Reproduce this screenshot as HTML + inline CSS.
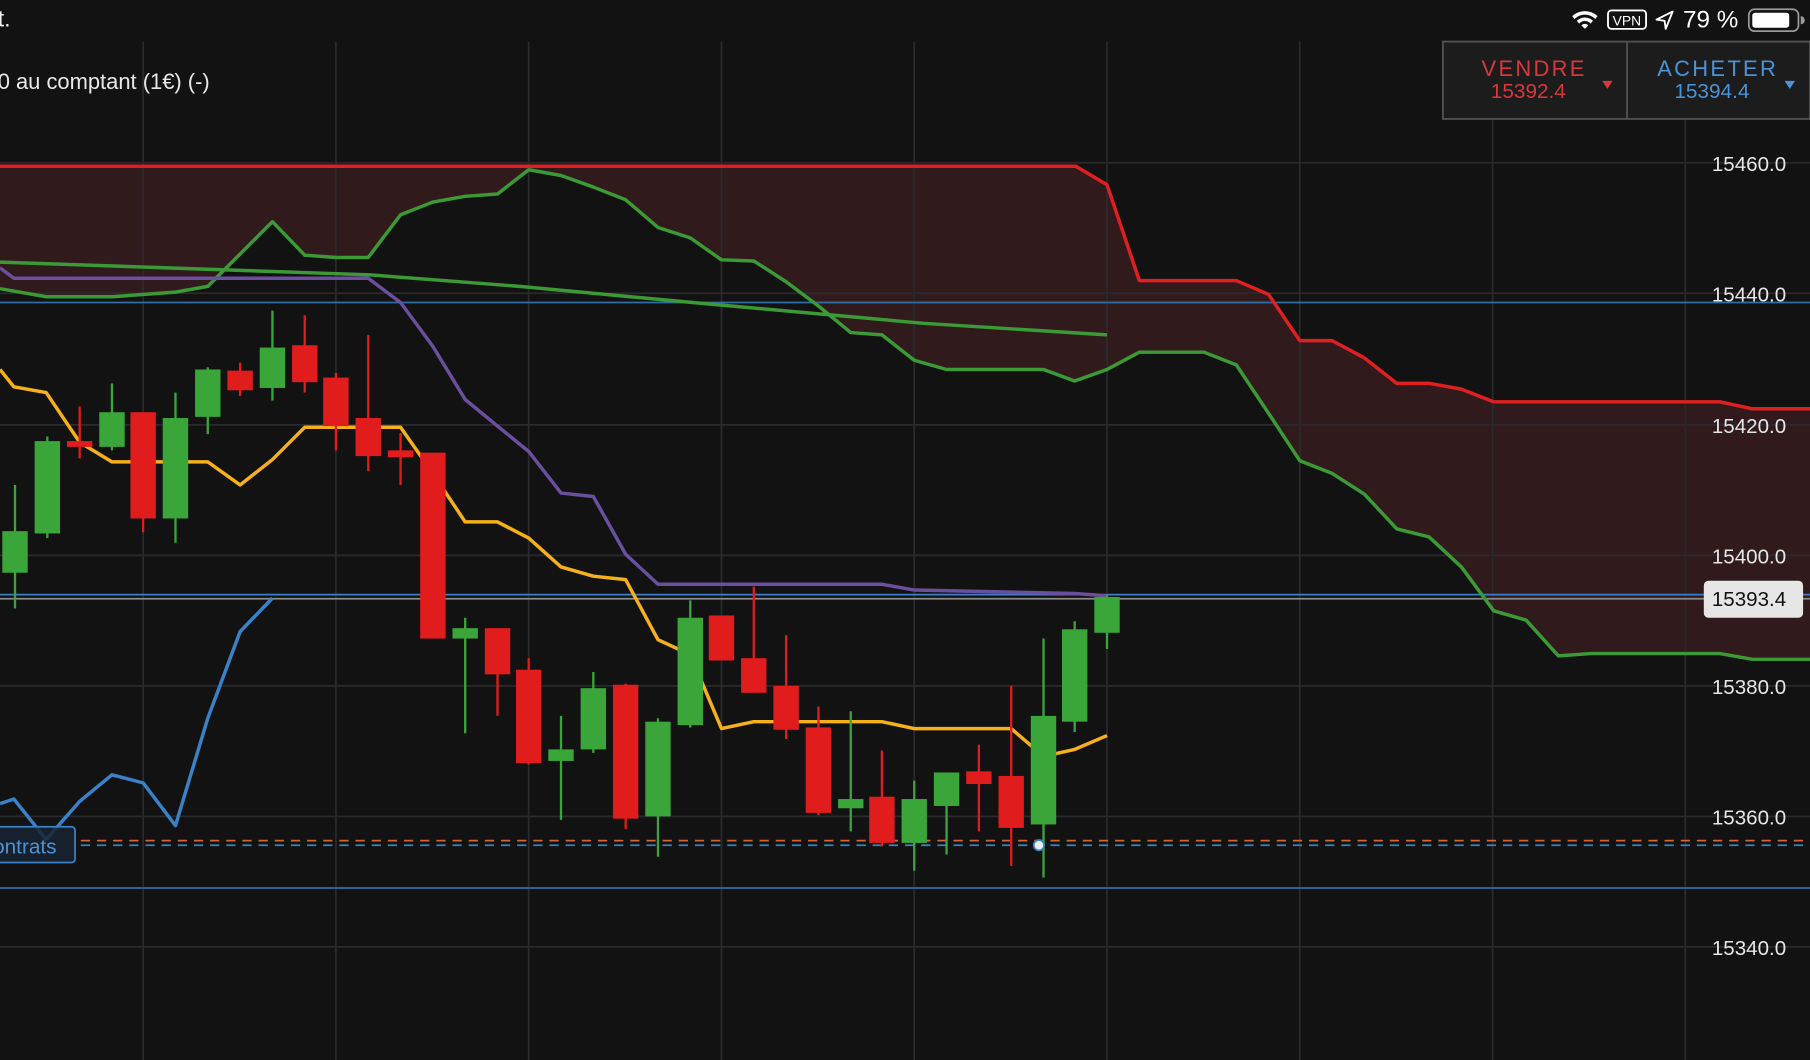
<!DOCTYPE html>
<html><head><meta charset="utf-8"><style>
html,body{margin:0;padding:0;background:#121212;width:1810px;height:1060px;overflow:hidden}
svg{display:block}
text{font-family:"Liberation Sans",sans-serif}
</style></head><body>
<svg width="1810" height="1060" viewBox="0 0 1568 918" preserveAspectRatio="none">
<rect width="1568" height="918" fill="#121212"/>
<polygon fill="#301a1c" points="0,144 932,144 959,160 987,243 1071,243 1099,255 1126,295 1154,295 1182,310 1210,332 1238,332 1266,337 1294,348 1490,348 1518,354 1568,354 1568,571 1518,571 1490,566 1378,566 1350,568 1322,537 1294,529 1266,491 1238,465 1210,458 1182,428 1154,410 1126,399 1099,358 1071,316 1043,305 987,305 959,320 931,330 904,320 820,320 792,312 764,290 737,288 709,265 681,244 653,226 625,225 598,206 570,197 542,173 514,162 486,152 458,147 431,168 403,170 375,175 347,186 319,223 291,223 264,221 236,192 180,248 152,253 97,257 40,257 0,250"/>
<g stroke="#2a2a2d" stroke-width="1.5">
<line x1="124" y1="36" x2="124" y2="918"/><line x1="291" y1="36" x2="291" y2="918"/><line x1="458" y1="36" x2="458" y2="918"/><line x1="625" y1="36" x2="625" y2="918"/><line x1="792" y1="36" x2="792" y2="918"/><line x1="959" y1="36" x2="959" y2="918"/><line x1="1126" y1="36" x2="1126" y2="918"/><line x1="1293" y1="103" x2="1293" y2="918"/><line x1="1460" y1="103" x2="1460" y2="918"/>
<line x1="0" y1="141" x2="1568" y2="141"/><line x1="0" y1="254" x2="1568" y2="254"/><line x1="0" y1="368" x2="1568" y2="368"/><line x1="0" y1="481" x2="1568" y2="481"/><line x1="0" y1="594" x2="1568" y2="594"/><line x1="0" y1="707" x2="1568" y2="707"/><line x1="0" y1="820" x2="1568" y2="820"/>
</g>
<line x1="0" y1="262" x2="1568" y2="262" stroke="#2f6ea8" stroke-width="1.5"/>
<line x1="0" y1="769" x2="1568" y2="769" stroke="#2f6ea8" stroke-width="1.5"/>
<line x1="0" y1="518.5" x2="1568" y2="518.5" stroke="#8a8a8a" stroke-width="1.5"/>
<line x1="0" y1="515" x2="1568" y2="515" stroke="#3a7fc8" stroke-width="1.5"/>
<line x1="70" y1="728" x2="1568" y2="728" stroke="#d8632e" stroke-width="1.5" stroke-dasharray="8,6"/>
<line x1="70" y1="732" x2="1568" y2="732" stroke="#3a82c8" stroke-width="1.5" stroke-dasharray="8,6"/>
<g fill="none" stroke-width="3" stroke-linejoin="round">
<polyline stroke="#e02020" points="0,144 932,144 959,160 987,243 1071,243 1099,255 1126,295 1154,295 1182,310 1210,332 1238,332 1266,337 1294,348 1490,348 1518,354 1568,354"/>
<polyline stroke="#3b9a35" points="0,250 40,257 97,257 152,253 180,248 236,192 264,221 291,223 319,223 347,186 375,175 403,170 431,168 458,147 486,152 514,162 542,173 570,197 598,206 625,225 653,226 681,244 709,265 737,288 764,290 792,312 820,320 904,320 931,330 959,320 987,305 1043,305 1071,316 1099,358 1126,399 1154,410 1182,428 1210,458 1238,465 1266,491 1294,529 1322,537 1350,568 1378,566 1490,566 1518,571 1568,571"/>
<polyline stroke="#3b9a35" points="0,227 320,238 450,248 600,262 800,280 959,290"/>
<polyline stroke="#6b4f9e" points="0,232 12,241 319,241 347,262 375,300 403,346 431,369 458,391 486,427 514,430 542,480 570,506 764,506 792,511 931,514 959,516"/>
<polyline stroke="#f5b01b" points="0,320 12,335 40,340 69,383 97,400 180,400 208,420 236,398 264,370 347,370 375,410 403,452 431,452 458,466 486,491 514,499 542,502 570,554 598,567 625,631 653,625 764,625 792,631 876,631 904,655 931,649 959,637"/>
<polyline stroke="#3a82c8" points="0,696 12,692 40,727 69,694 97,671 124,678 152,715 180,622 208,547 236,518"/>
</g>
<g stroke-width="2">
<g fill="#3aa63a" stroke="#3aa63a">
<line x1="13" y1="420" x2="13" y2="527"/><rect x="3" y="461" width="20" height="34"/>
<line x1="41" y1="378" x2="41" y2="466"/><rect x="31" y="383" width="20" height="78"/>
<line x1="97" y1="332" x2="97" y2="390"/><rect x="87" y="358" width="20" height="28"/>
<line x1="152" y1="340" x2="152" y2="470"/><rect x="142" y="363" width="20" height="85"/>
<line x1="180" y1="318" x2="180" y2="376"/><rect x="170" y="321" width="20" height="39"/>
<line x1="236" y1="269" x2="236" y2="347"/><rect x="226" y="302" width="20" height="33"/>
<line x1="403" y1="535" x2="403" y2="635"/><rect x="393" y="545" width="20" height="7"/>
<line x1="486" y1="620" x2="486" y2="710"/><rect x="476" y="650" width="20" height="8"/>
<line x1="514" y1="582" x2="514" y2="652"/><rect x="504" y="597" width="20" height="51"/>
<line x1="570" y1="622" x2="570" y2="742"/><rect x="560" y="626" width="20" height="80"/>
<line x1="598" y1="520" x2="598" y2="630"/><rect x="588" y="536" width="20" height="91"/>
<line x1="737" y1="616" x2="737" y2="720"/><rect x="727" y="693" width="20" height="6"/>
<line x1="792" y1="676" x2="792" y2="754"/><rect x="782" y="693" width="20" height="36"/>
<line x1="820" y1="670" x2="820" y2="740"/><rect x="810" y="670" width="20" height="27"/>
<line x1="904" y1="553" x2="904" y2="760"/><rect x="894" y="621" width="20" height="92"/>
<line x1="931" y1="538" x2="931" y2="634"/><rect x="921" y="546" width="20" height="78"/>
<line x1="959" y1="515" x2="959" y2="562"/><rect x="949" y="518" width="20" height="29"/>
</g>
<g fill="#e01c1c" stroke="#e01c1c">
<line x1="69" y1="352" x2="69" y2="397"/><rect x="59" y="383" width="20" height="3"/>
<line x1="124" y1="358" x2="124" y2="461"/><rect x="114" y="358" width="20" height="90"/>
<line x1="208" y1="314" x2="208" y2="343"/><rect x="198" y="322" width="20" height="15"/>
<line x1="264" y1="273" x2="264" y2="340"/><rect x="254" y="300" width="20" height="30"/>
<line x1="291" y1="323" x2="291" y2="390"/><rect x="281" y="328" width="20" height="40"/>
<line x1="319" y1="290" x2="319" y2="408"/><rect x="309" y="363" width="20" height="31"/>
<line x1="347" y1="375" x2="347" y2="420"/><rect x="337" y="391" width="20" height="4"/>
<rect x="365" y="393" width="20" height="159"/>
<line x1="431" y1="545" x2="431" y2="620"/><rect x="421" y="545" width="20" height="38"/>
<line x1="458" y1="570" x2="458" y2="662"/><rect x="448" y="581" width="20" height="79"/>
<line x1="542" y1="592" x2="542" y2="718"/><rect x="532" y="594" width="20" height="114"/>
<rect x="615" y="534" width="20" height="37"/>
<line x1="653" y1="508" x2="653" y2="599"/><rect x="643" y="571" width="20" height="28"/>
<line x1="681" y1="550" x2="681" y2="640"/><rect x="671" y="595" width="20" height="36"/>
<line x1="709" y1="612" x2="709" y2="706"/><rect x="699" y="631" width="20" height="72"/>
<line x1="764" y1="650" x2="764" y2="733"/><rect x="754" y="691" width="20" height="38"/>
<line x1="848" y1="645" x2="848" y2="720"/><rect x="838" y="669" width="20" height="9"/>
<line x1="876" y1="594" x2="876" y2="750"/><rect x="866" y="673" width="20" height="43"/>
</g>
</g>
<circle cx="900" cy="732" r="4.5" fill="#e8eef5" stroke="#3a82c8" stroke-width="1.5"/>
<rect x="-6" y="716" width="71" height="31" rx="3" fill="rgba(25,35,50,0.85)" stroke="#3a82c8" stroke-width="1.5"/>
<text x="-6" y="739" font-size="18" fill="#4a93d8">ontrats</text>
<g font-size="17.8" fill="#e6e6e6">
<text x="1483" y="148">15460.0</text><text x="1483" y="261">15440.0</text><text x="1483" y="375">15420.0</text><text x="1483" y="488">15400.0</text><text x="1483" y="601">15380.0</text><text x="1483" y="714">15360.0</text><text x="1483" y="827">15340.0</text>
</g>
<rect x="1476" y="503" width="86" height="32" rx="4" fill="#e6e6e6"/>
<text x="1483" y="525" font-size="17.8" fill="#111">15393.4</text>
<text x="-2" y="23" font-size="20" fill="#f0f0f0">t.</text>
<text x="-2" y="77" font-size="19" fill="#e8e8e8">0 au comptant (1€) (-)</text>
<g fill="#fff">
<path d="M1362 14 a16 16 0 0 1 22 0 l-2 2.5 a12.5 12.5 0 0 0 -18 0z M1366 18 a10 10 0 0 1 14 0 l-2 2.5 a6.5 6.5 0 0 0 -10 0z M1370 22 a4 4 0 0 1 6 0 l-3 3z"/>
</g>
<rect x="1393" y="9" width="33" height="16" rx="3" fill="none" stroke="#fff" stroke-width="1.6"/>
<text x="1397" y="22" font-size="12" fill="#fff">VPN</text>
<path d="M1449 10 L1435 17 L1442 18 L1443 25 Z" fill="none" stroke="#fff" stroke-width="1.6" stroke-linejoin="round"/>
<text x="1458" y="24" font-size="21" fill="#fff">79 %</text>
<rect x="1515" y="8" width="43" height="19" rx="5" fill="none" stroke="#999" stroke-width="1.5"/>
<rect x="1518" y="11" width="32" height="13" rx="2.5" fill="#fff"/>
<path d="M1560 14 a3 3 0 0 1 0 7z" fill="#999"/>
<rect x="1250" y="36" width="318" height="67" fill="#1c1c1c" stroke="#555" stroke-width="1.5"/>
<line x1="1409.5" y1="36" x2="1409.5" y2="103" stroke="#555" stroke-width="1.5"/>
<text x="1329" y="66" font-size="19" fill="#d8383c" text-anchor="middle" letter-spacing="2">VENDRE</text>
<text x="1324" y="85" font-size="18" fill="#d8383c" text-anchor="middle">15392.4</text>
<path d="M1388 70 h9 l-4.5 7z" fill="#d8383c"/>
<text x="1488" y="66" font-size="19" fill="#4a93d8" text-anchor="middle" letter-spacing="2">ACHETER</text>
<text x="1483" y="85" font-size="18" fill="#4a93d8" text-anchor="middle">15394.4</text>
<path d="M1546 70 h9 l-4.5 7z" fill="#4a93d8"/>
</svg>
</body></html>
